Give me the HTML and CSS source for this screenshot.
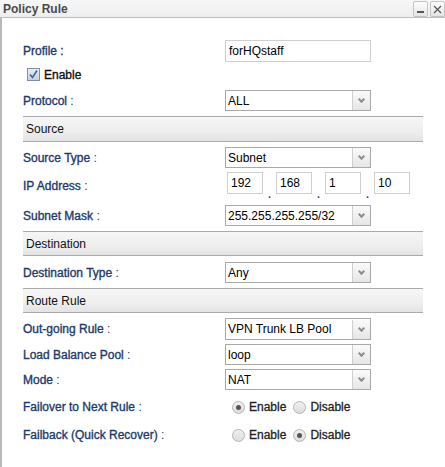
FILE: index.html
```html
<!DOCTYPE html>
<html lang="en">
<head>
    <meta charset="UTF-8">
    <title>Policy Rule</title>
    <link rel="stylesheet" href="styles.css">
</head>
<body>
    <!-- Window title -->
    <div class="titlebar">
        <span class="title">Policy Rule</span>
        <div class="win-buttons">
            <span class="win-btn"><svg width="9" height="9" viewBox="0 0 9 9"><rect x="1" y="6" width="7" height="2" fill="#555"/></svg></span>
            <span class="win-btn"><svg width="9" height="9" viewBox="0 0 9 9"><path d="M1 1 L8 8 M8 1 L1 8" stroke="#555" stroke-width="1.2"/></svg></span>
        </div>
    </div>

    <div class="panel">
        <div class="form">
            <div class="row row-profile">
                <label class="lbl">Profile :</label>
                <div class="text-input wide">forHQstaff</div>
            </div>
            <div class="row row-enable">
                <span class="checkbox"><svg width="11" height="11" viewBox="0 0 11 11"><path d="M2 5.5 L4.5 8.5 L9 1.5" fill="none" stroke="#3a64a8" stroke-width="1.6"/></svg></span>
                <span class="enable-text">Enable</span>
            </div>
            <div class="row row-protocol">
                <label class="lbl">Protocol <span class="colon">:</span></label>
                <div class="select"><span class="val">ALL</span><span class="arrow"></span></div>
            </div>

            <div class="section sec-source">Source</div>
            <div class="row row-srctype">
                <label class="lbl">Source Type <span class="colon">:</span></label>
                <div class="select"><span class="val">Subnet</span><span class="arrow"></span></div>
            </div>
            <div class="row row-ip">
                <label class="lbl">IP Address <span class="colon">:</span></label>
                <div class="ip">
                    <div class="text-input octet">192</div><span class="dot">.</span>
                    <div class="text-input octet">168</div><span class="dot">.</span>
                    <div class="text-input octet">1</div><span class="dot">.</span>
                    <div class="text-input octet">10</div>
                </div>
            </div>
            <div class="row row-mask">
                <label class="lbl">Subnet Mask <span class="colon">:</span></label>
                <div class="select"><span class="val">255.255.255.255/32</span><span class="arrow"></span></div>
            </div>

            <div class="section sec-dest">Destination</div>
            <div class="row row-desttype">
                <label class="lbl">Destination Type <span class="colon">:</span></label>
                <div class="select"><span class="val">Any</span><span class="arrow"></span></div>
            </div>

            <div class="section sec-route">Route Rule</div>
            <div class="row row-out">
                <label class="lbl">Out-going Rule <span class="colon">:</span></label>
                <div class="select"><span class="val">VPN Trunk LB Pool</span><span class="arrow"></span></div>
            </div>
            <div class="row row-lb">
                <label class="lbl">Load Balance Pool <span class="colon">:</span></label>
                <div class="select"><span class="val">loop</span><span class="arrow"></span></div>
            </div>
            <div class="row row-mode">
                <label class="lbl">Mode <span class="colon">:</span></label>
                <div class="select"><span class="val">NAT</span><span class="arrow"></span></div>
            </div>
            <div class="row row-failover">
                <label class="lbl">Failover to Next Rule <span class="colon">:</span></label>
                <div class="radios">
                    <span class="radio checked"></span><span class="radio-text">Enable</span>
                    <span class="radio"></span><span class="radio-text">Disable</span>
                </div>
            </div>
            <div class="row row-failback">
                <label class="lbl">Failback (Quick Recover) <span class="colon">:</span></label>
                <div class="radios">
                    <span class="radio"></span><span class="radio-text">Enable</span>
                    <span class="radio checked"></span><span class="radio-text">Disable</span>
                </div>
            </div>
        </div>
    </div>
</body>
</html>
```

FILE: styles.css
```css
body {
    margin: 0;
    padding: 0;
    background-color: #fff;
    font-family: "Liberation Sans", Arial, sans-serif;
    font-size: 12px;
    color: #000;
}

/* Title bar */
.titlebar {
    height: 17px;
    background: linear-gradient(#f7f7f7, #eeeeee);
    border-bottom: 1px solid #bdbdbd;
    display: flex;
    justify-content: space-between;
    align-items: center;
}

.title {
    padding-left: 3px;
    font-weight: bold;
    color: #4a4a4a;
    font-size: 12px;
}

.win-buttons {
    display: flex;
    gap: 2px;
    align-self: flex-start;
    padding-top: 1px;
}

.win-btn {
    width: 13px;
    height: 14px;
    border: 1px solid #c4c4c4;
    border-radius: 2px;
    background: linear-gradient(#fdfdfd, #e4e4e4);
    display: flex;
    align-items: center;
    justify-content: center;
}

/* Panel */
.panel {
    border-left: 2px solid #b8b8b8;
    height: 449px;
}

.form {
    padding-left: 21px;
    width: 400px;
    padding-top: 22px;
}

.row {
    display: flex;
    align-items: center;
    height: 22px;
}

.lbl {
    width: 202px;
    color: #1d3a6c;
    -webkit-text-stroke: 0.35px #1d3a6c;
}

.colon {
    -webkit-text-stroke: 0;
}

.text-input {
    box-sizing: border-box;
    height: 22px;
    border: 1px solid #cfcfcf;
    padding: 0 3px;
    display: flex;
    align-items: center;
    background: #fff;
}

.text-input.wide {
    width: 146px;
}

.row-enable {
    margin-top: 4px;
    height: 17px;
    padding-left: 4px;
}

.checkbox {
    width: 11px;
    height: 11px;
    border: 1px solid #7f8ea3;
    background: linear-gradient(#e8ecf2, #c9d1dc);
    display: flex;
    align-items: center;
    justify-content: center;
}

.enable-text {
    margin-left: 4px;
    color: #111;
    -webkit-text-stroke: 0.35px #111;
}

.row-protocol { margin-top: 7px; height: 21px; }

/* Selects */
.select {
    box-sizing: border-box;
    width: 146px;
    height: 21px;
    border: 1px solid #a9a9a9;
    display: flex;
    align-items: center;
    background: #fff;
}

.select .val {
    flex: 1;
    padding-left: 2px;
}

.select .arrow {
    width: 17px;
    height: 19px;
    border-left: 1px solid #cfcfcf;
    background: linear-gradient(#fafafa, #e6e6e6);
    position: relative;
}

.select .arrow::after {
    content: "";
    position: absolute;
    left: 6px;
    top: 6px;
    width: 3px;
    height: 3px;
    border-right: 2px solid #8d8d8d;
    border-bottom: 2px solid #8d8d8d;
    transform: rotate(45deg);
}

/* Section headers */
.section {
    box-sizing: border-box;
    height: 26px;
    border-top: 1px solid #aaaaaa;
    border-bottom: 1px solid #aaaaaa;
    background: linear-gradient(#f6f6f6, #eeeeee 60%, #e3e3e3);
    display: flex;
    align-items: center;
    padding-left: 3px;
    color: #111;
}

.sec-source { margin-top: 5px; }
.sec-dest { margin-top: 5px; height: 25px; }
.sec-route { margin-top: 5px; height: 25px; }

.row-srctype { margin-top: 5px; height: 21px; }
.row-ip { margin-top: 7px; }
.row-mask { margin-top: 8px; height: 21px; }
.row-desttype { margin-top: 6px; height: 21px; }
.row-out { margin-top: 5px; }
.row-lb { margin-top: 4px; height: 21px; }
.row-mode { margin-top: 4px; height: 21px; }
.row-failover { margin-top: 8px; height: 18px; }
.row-failback { margin-top: 10px; height: 18px; }

.row-out .select { height: 22px; }

/* IP address */
.ip {
    display: flex;
    align-items: flex-start;
    padding-left: 2px;
}

.octet {
    width: 36px;
    padding: 0 3px;
}

.dot {
    width: 13px;
    text-align: center;
    color: #7a1a8a;
    font-weight: bold;
    font-size: 11px;
    line-height: 11px;
    padding-top: 17px;
}

/* Radios */
.radios {
    display: flex;
    align-items: center;
    padding-left: 7px;
}

.radio {
    box-sizing: border-box;
    width: 13px;
    height: 13px;
    border-radius: 50%;
    border: 1px solid #b5b5b5;
    background: linear-gradient(#f0f0f0, #dcdcdc);
    position: relative;
}

.radio.checked::after {
    content: "";
    position: absolute;
    left: 3px;
    top: 3px;
    width: 5px;
    height: 5px;
    border-radius: 50%;
    background: #555;
}

.radio-text {
    margin-left: 4px;
    margin-right: 7px;
    color: #222;
    -webkit-text-stroke: 0.3px #222;
}
```
